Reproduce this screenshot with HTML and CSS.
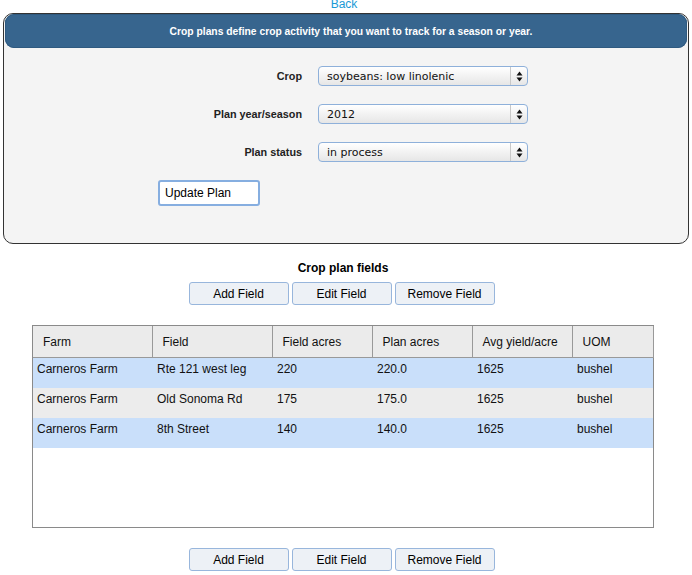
FILE: index.html
```html
<!DOCTYPE html>
<html>
<head>
<meta charset="utf-8">
<link rel="stylesheet" href="styles.css">
</head>
<body>
<div class="back"><a href="#">Back</a></div>
<div class="panel">
  <div class="panel-head">Crop plans define crop activity that you want to track for a season or year.</div>
  <div class="form">
    <div class="label">Crop</div>
    <div class="select"><span class="value">soybeans: low linolenic</span><span class="arrows"><svg width="7" height="11" viewBox="0 0 7 11"><path d="M3.5 0.5L6.5 4.5H0.5Z M3.5 10.5L6.5 6.5H0.5Z" fill="#111"/></svg></span></div>
    <div class="label">Plan year/season</div>
    <div class="select"><span class="value">2012</span><span class="arrows"><svg width="7" height="11" viewBox="0 0 7 11"><path d="M3.5 0.5L6.5 4.5H0.5Z M3.5 10.5L6.5 6.5H0.5Z" fill="#111"/></svg></span></div>
    <div class="label">Plan status</div>
    <div class="select"><span class="value">in process</span><span class="arrows"><svg width="7" height="11" viewBox="0 0 7 11"><path d="M3.5 0.5L6.5 4.5H0.5Z M3.5 10.5L6.5 6.5H0.5Z" fill="#111"/></svg></span></div>
  </div>
  <button class="update">Update Plan</button>
</div>
<div class="section-title">Crop plan fields</div>
<div class="btn-row">
  <button class="btn">Add Field</button>
  <button class="btn">Edit Field</button>
  <button class="btn">Remove Field</button>
</div>
<div class="grid">
  <table>
    <colgroup>
      <col class="c1"><col class="c2"><col class="c3"><col class="c4"><col class="c5"><col class="c6">
    </colgroup>
    <thead>
      <tr><th>Farm</th><th>Field</th><th>Field acres</th><th>Plan acres</th><th>Avg yield/acre</th><th>UOM</th></tr>
    </thead>
    <tbody>
      <tr class="blue"><td>Carneros Farm</td><td>Rte 121 west leg</td><td>220</td><td>220.0</td><td>1625</td><td>bushel</td></tr>
      <tr class="gray"><td>Carneros Farm</td><td>Old Sonoma Rd</td><td>175</td><td>175.0</td><td>1625</td><td>bushel</td></tr>
      <tr class="blue"><td>Carneros Farm</td><td>8th Street</td><td>140</td><td>140.0</td><td>1625</td><td>bushel</td></tr>
    </tbody>
  </table>
</div>
<div class="btn-row bottom">
  <button class="btn">Add Field</button>
  <button class="btn">Edit Field</button>
  <button class="btn">Remove Field</button>
</div>
</body>
</html>
```
FILE: styles.css
```css
html, body {
  margin: 0;
  padding: 0;
  background: #fff;
  font-family: "Liberation Sans", Arial, sans-serif;
  font-size: 12px;
  color: #000;
  overflow: hidden;
}
.back {
  margin-top: -3px;
  height: 14px;
  line-height: 14px;
  text-align: center;
  padding-right: 4px;
}
.back a {
  color: #1a9ad6;
  text-decoration: none;
  font-size: 12px;
}
.panel {
  box-sizing: border-box;
  margin: 2px 0 0 3px;
  width: 686px;
  height: 231px;
  border: 1px solid #333;
  border-radius: 10px;
  background: #f4f4f4;
}
.panel-head {
  margin: 0 1px;
  height: 34px;
  background: #37658e;
  border-radius: 9px;
  color: #fff;
  font-weight: bold;
  font-size: 10.3px;
  display: flex;
  align-items: center;
  justify-content: center;
  padding-left: 10px;
  box-shadow: inset 0 0 0 1px #2f5a80;
}
.form {
  display: grid;
  grid-template-columns: 298px 210px;
  column-gap: 16px;
  row-gap: 18px;
  padding-top: 18px;
  align-items: center;
}
.label {
  text-align: right;
  font-weight: bold;
  font-size: 10.8px;
  color: #222;
}
.select {
  box-sizing: border-box;
  height: 20px;
  border: 1px solid #8eb0da;
  border-radius: 4px;
  background: linear-gradient(#ffffff, #f0f0f0 60%, #e6e6e6);
  display: flex;
  align-items: stretch;
  font-family: "DejaVu Sans", Verdana, sans-serif;
  font-size: 11px;
  color: #111;
}
.select .value {
  flex: 1;
  padding-left: 8px;
  display: flex;
  align-items: center;
}
.select .arrows {
  width: 16px;
  border-left: 1px solid #c8c8c8;
  display: flex;
  align-items: center;
  justify-content: center;
}
.update {
  display: block;
  box-sizing: border-box;
  margin: 18px 0 0 154px;
  width: 102px;
  height: 26px;
  padding: 0 0 0 5px;
  text-align: left;
  background: #fff;
  border: 2px solid #86aee0;
  border-radius: 3px;
  font-family: "Liberation Sans", Arial, sans-serif;
  font-size: 12px;
  color: #000;
}
.section-title {
  margin-top: 17px;
  text-align: center;
  font-weight: bold;
  font-size: 12px;
  line-height: 14px;
  padding-right: 6px;
}
.btn-row {
  margin-top: 7px;
  display: flex;
  justify-content: center;
  gap: 3px;
  padding-right: 9px;
}
.btn-row.bottom {
  margin-top: 20px;
}
.btn {
  box-sizing: border-box;
  width: 100px;
  height: 23px;
  padding: 0;
  background: #edf1f6;
  border: 1px solid #98b6dc;
  border-radius: 3px;
  font-family: "Liberation Sans", Arial, sans-serif;
  font-size: 12px;
  color: #000;
}
.grid {
  box-sizing: border-box;
  margin: 20px 0 0 32px;
  width: 622px;
  height: 203px;
  border: 1px solid #8a8a8a;
  background: #fff;
}
table {
  border-collapse: collapse;
  table-layout: fixed;
  width: 620px;
}
col.c1 { width: 119px; }
col.c2 { width: 120px; }
col.c3 { width: 100px; }
col.c4 { width: 100px; }
col.c5 { width: 100px; }
col.c6 { width: 81px; }
th {
  height: 31px;
  padding: 0 0 0 10px;
  text-align: left;
  font-weight: normal;
  font-size: 12px;
  background: #ebebeb;
  border-right: 1px solid #999;
  border-bottom: 1px solid #999;
  color: #111;
}
td {
  height: 30px;
  box-sizing: border-box;
  padding: 4px 0 0 4px;
  vertical-align: top;
  font-size: 12px;
  line-height: 14px;
  color: #111;
  white-space: nowrap;
  overflow: hidden;
}
td:nth-child(n+2) {
  padding-left: 5px;
}
tr.blue td { background: #c9dffa; }
tr.gray td { background: #ececec; }
```
